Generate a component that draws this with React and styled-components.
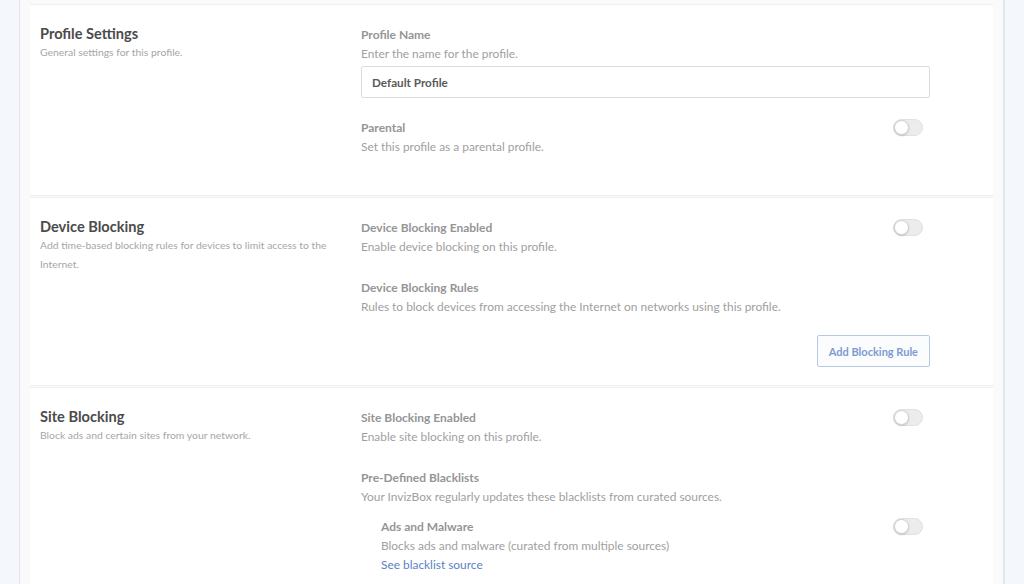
import React, { useState } from 'react';
import styled, { createGlobalStyle } from 'styled-components';

const GlobalStyle = createGlobalStyle`
  html, body {
    margin: 0;
    padding: 0;
    background: #f4f7fb;
    font-family: Lato, "Open Sans", "Liberation Sans", sans-serif;
  }
  * { box-sizing: border-box; }
`;

const Panel = styled.div`
  margin: 0 19px;
  min-height: 584px;
  border-left: 1px solid #e3e5e8;
  border-right: 2px solid #e3e5e8;
  background: #fafafa;
  padding: 4px 10px 0;
`;

const Section = styled.section`
  display: grid;
  grid-template-columns: 321px 569px;
  padding: 20px 10px ${({ $bottom }) => $bottom || 20}px;
  background: #fff;
  border-top: 1px solid #f0f0f0;
  border-bottom: 1px solid #f0f0f0;
  margin-bottom: 1px;
`;

const Intro = styled.div`
  display: flex;
  flex-direction: column;
`;

const Heading = styled.h2`
  margin: 0;
  font-size: 14.6px;
  line-height: 18px;
  font-weight: 700;
  color: #4b4b4b;
`;

const IntroText = styled.p`
  margin: 0;
  max-width: 296px;
  font-size: 10.4px;
  line-height: 19px;
  color: #a6a6a6;
`;

const Fields = styled.div`
  display: flex;
  flex-direction: column;
`;

const Field = styled.div`
  display: flex;
  justify-content: space-between;
  align-items: flex-start;
  margin-bottom: ${({ $gap }) => ($gap === undefined ? 22 : $gap)}px;
  padding-left: ${({ $indent }) => ($indent ? '20px' : '0')};
  &:last-child { margin-bottom: 0; }
`;

const FieldBody = styled.div`
  display: flex;
  flex-direction: column;
  flex: 1;
`;

const Label = styled.div`
  font-size: 12px;
  line-height: 19px;
  font-weight: 700;
  color: #959595;
`;

const Hint = styled.div`
  font-size: 11.9px;
  line-height: 19px;
  color: #a0a0a0;
`;

const Link = styled.a`
  font-size: 11.9px;
  line-height: 19px;
  color: #5a82c4;
  text-decoration: none;
  cursor: pointer;
`;

const TextInput = styled.input`
  margin-top: 3px;
  width: 100%;
  height: 32px;
  padding: 0 10px;
  border: 1px solid #dcdcdc;
  border-radius: 2px;
  font-family: inherit;
  font-size: 11.7px;
  font-weight: 700;
  color: #5a5a5a;
  outline: none;
`;

const Track = styled.button`
  position: relative;
  flex: none;
  width: 30px;
  height: 17px;
  margin: 1px 7px 0 0;
  padding: 0;
  border: 1px solid #e0e0e0;
  border-radius: 9px;
  background: ${({ $on }) => ($on ? '#7a9ad0' : '#ececec')};
  cursor: pointer;
`;

const Knob = styled.span`
  position: absolute;
  top: 0;
  left: ${({ $on }) => ($on ? '13px' : '0')};
  width: 15px;
  height: 15px;
  border-radius: 50%;
  background: #fff;
  border: 1px solid #cfcfcf;
  box-shadow: 0 1px 2px rgba(0, 0, 0, 0.15);
`;

const Actions = styled.div`
  display: flex;
  justify-content: flex-end;
`;

const OutlineButton = styled.button`
  height: 32px;
  padding: 0 11px;
  border: 1px solid #b8c8e4;
  border-radius: 2px;
  background: #fbfcfe;
  font-family: inherit;
  font-size: 11px;
  font-weight: 700;
  color: #7b9bd0;
  cursor: pointer;
`;

function Toggle({ initial = false }) {
  const [on, setOn] = useState(initial);
  return (
    <Track $on={on} onClick={() => setOn(!on)} aria-pressed={on}>
      <Knob $on={on} />
    </Track>
  );
}

export default function App() {
  const [name, setName] = useState('Default Profile');

  return (
    <>
      <GlobalStyle />
      <Panel>
        <Section $bottom={39}>
          <Intro>
            <Heading>Profile Settings</Heading>
            <IntroText>General settings for this profile.</IntroText>
          </Intro>
          <Fields>
            <Field $gap={20}>
              <FieldBody>
                <Label>Profile Name</Label>
                <Hint>Enter the name for the profile.</Hint>
                <TextInput value={name} onChange={e => setName(e.target.value)} />
              </FieldBody>
            </Field>
            <Field>
              <FieldBody>
                <Label>Parental</Label>
                <Hint>Set this profile as a parental profile.</Hint>
              </FieldBody>
              <Toggle />
            </Field>
          </Fields>
        </Section>

        <Section $bottom={18}>
          <Intro>
            <Heading>Device Blocking</Heading>
            <IntroText>Add time-based blocking rules for devices to limit access to the Internet.</IntroText>
          </Intro>
          <Fields>
            <Field>
              <FieldBody>
                <Label>Device Blocking Enabled</Label>
                <Hint>Enable device blocking on this profile.</Hint>
              </FieldBody>
              <Toggle />
            </Field>
            <Field $gap={19}>
              <FieldBody>
                <Label>Device Blocking Rules</Label>
                <Hint>Rules to block devices from accessing the Internet on networks using this profile.</Hint>
              </FieldBody>
            </Field>
            <Actions>
              <OutlineButton>Add Blocking Rule</OutlineButton>
            </Actions>
          </Fields>
        </Section>

        <Section>
          <Intro>
            <Heading>Site Blocking</Heading>
            <IntroText>Block ads and certain sites from your network.</IntroText>
          </Intro>
          <Fields>
            <Field>
              <FieldBody>
                <Label>Site Blocking Enabled</Label>
                <Hint>Enable site blocking on this profile.</Hint>
              </FieldBody>
              <Toggle />
            </Field>
            <Field $gap={11}>
              <FieldBody>
                <Label>Pre-Defined Blacklists</Label>
                <Hint>Your InvizBox regularly updates these blacklists from curated sources.</Hint>
              </FieldBody>
            </Field>
            <Field $indent>
              <FieldBody>
                <Label>Ads and Malware</Label>
                <Hint>Blocks ads and malware (curated from multiple sources)</Hint>
                <Link>See blacklist source</Link>
              </FieldBody>
              <Toggle />
            </Field>
          </Fields>
        </Section>
      </Panel>
    </>
  );
}
